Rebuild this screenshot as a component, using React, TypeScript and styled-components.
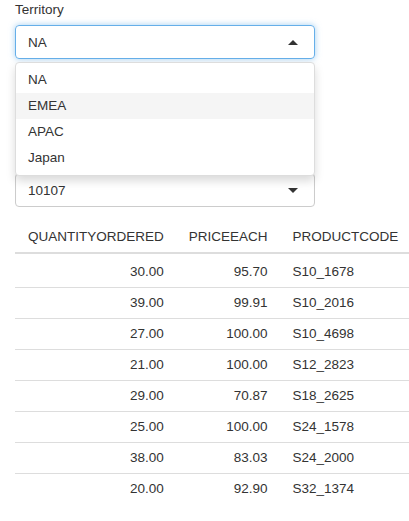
import React from 'react';
import styled, { createGlobalStyle } from 'styled-components';

const GlobalStyle = createGlobalStyle`
  body {
    margin: 0;
    font-family: "Liberation Sans", Arial, sans-serif;
    font-size: 13.5px;
    color: #333;
    background: #fff;
  }
`;

const Page = styled.div`
  padding: 0 0 0 15px;
  width: 409px;
  box-sizing: border-box;
  overflow: hidden;
`;

const FormGroup = styled.div<{ $top: number }>`
  position: relative;
  padding-top: ${(p) => p.$top}px;
  width: 300px;
`;

const Label = styled.div`
  height: 20px;
  line-height: 20px;
  margin-bottom: 5px;
`;

const Select = styled.div<{ $open?: boolean }>`
  height: 34px;
  box-sizing: border-box;
  border: 1px solid ${(p) => (p.$open ? '#66afe9' : '#ccc')};
  border-radius: 4px;
  box-shadow: ${(p) => (p.$open ? '0 0 6px rgba(102,175,233,.6)' : 'inset 0 1px 1px rgba(0,0,0,.075)')};
  display: flex;
  align-items: center;
  justify-content: space-between;
  padding: 0 16px 0 12px;
`;

const Caret = styled.span<{ $up?: boolean }>`
  width: 0;
  height: 0;
  border-left: 5px solid transparent;
  border-right: 5px solid transparent;
  ${(p) => (p.$up ? 'border-bottom: 5px solid #333;' : 'border-top: 5px solid #333;')}
`;

const Menu = styled.div`
  position: absolute;
  top: 62px;
  left: 0;
  width: 300px;
  box-sizing: border-box;
  background: #fff;
  border: 1px solid #ddd;
  border-radius: 4px;
  box-shadow: 0 5px 10px rgba(0, 0, 0, 0.15);
  padding: 4px 0;
  z-index: 10;
`;

const Option = styled.div<{ $active?: boolean }>`
  height: 26px;
  line-height: 26px;
  padding-left: 12px;
  background: ${(p) => (p.$active ? '#f5f5f5' : 'transparent')};
`;

const Table = styled.table`
  margin-top: 15px;
  border-collapse: collapse;
  white-space: nowrap;
`;

const Th = styled.th`
  text-align: left;
  font-weight: normal;
  padding: 7px 12px 7px 13px;
  line-height: 16px;
  border-bottom: 2px solid #ddd;
`;

const Td = styled.td<{ $num?: boolean }>`
  text-align: ${(p) => (p.$num ? 'right' : 'left')};
  padding: 7px 12px 7px 13px;
  line-height: 16px;
  border-top: 1px solid #ddd;
  tr:first-child > & {
    border-top: none;
    padding-top: 10px;
  }
`;

const rows = [
  ['30.00', '95.70', 'S10_1678'],
  ['39.00', '99.91', 'S10_2016'],
  ['27.00', '100.00', 'S10_4698'],
  ['21.00', '100.00', 'S12_2823'],
  ['29.00', '70.87', 'S18_2625'],
  ['25.00', '100.00', 'S24_1578'],
  ['38.00', '83.03', 'S24_2000'],
  ['20.00', '92.90', 'S32_1374'],
];

export default function App() {
  return (
    <Page>
      <GlobalStyle />
      <FormGroup $top={0}>
        <Label>Territory</Label>
        <Select $open>
          <span>NA</span>
          <Caret $up />
        </Select>
        <Menu>
          <Option>NA</Option>
          <Option $active>EMEA</Option>
          <Option>APAC</Option>
          <Option>Japan</Option>
        </Menu>
      </FormGroup>
      <FormGroup $top={114}>
        <Select>
          <span>10107</span>
          <Caret />
        </Select>
      </FormGroup>
      <Table>
        <thead>
          <tr>
            <Th>QUANTITYORDERED</Th>
            <Th>PRICEEACH</Th>
            <Th>PRODUCTCODE</Th>
          </tr>
        </thead>
        <tbody>
          {rows.map((r) => (
            <tr key={r[2]}>
              <Td $num>{r[0]}</Td>
              <Td $num>{r[1]}</Td>
              <Td>{r[2]}</Td>
            </tr>
          ))}
        </tbody>
      </Table>
    </Page>
  );
}
